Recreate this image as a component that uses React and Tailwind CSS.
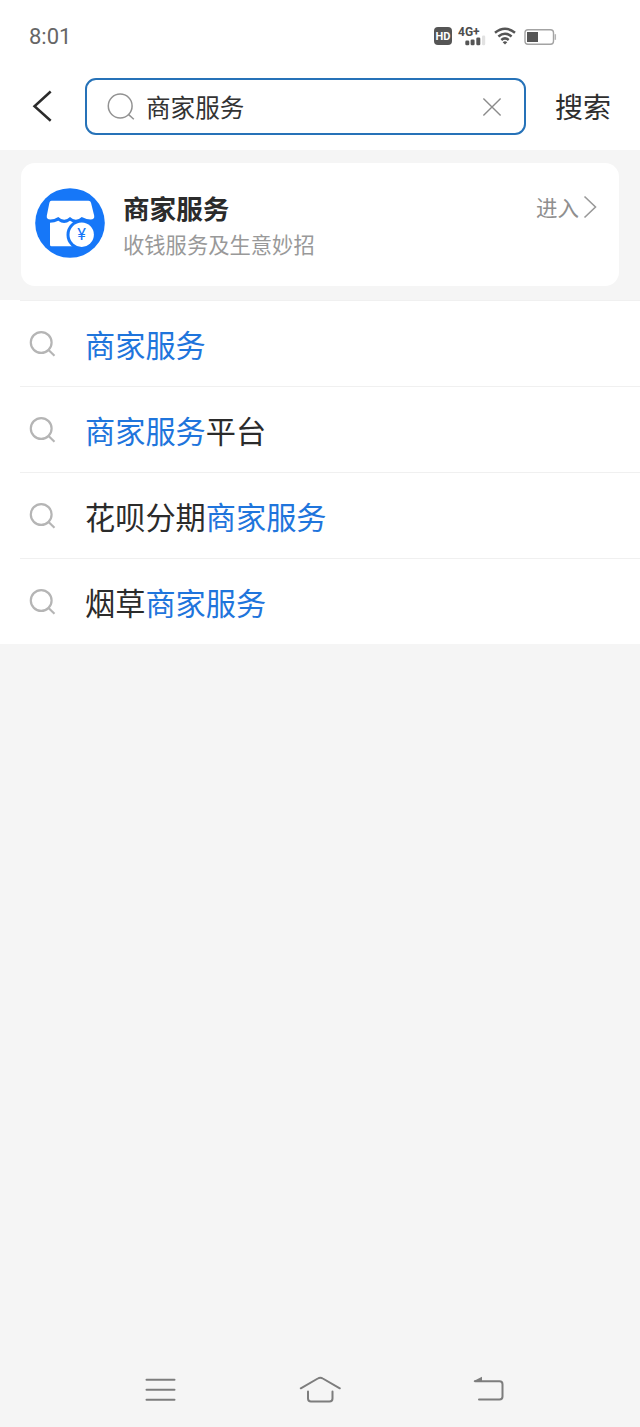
const SUGGESTIONS = [
  [{text: "商家服务", hit: true}],
  [{text: "商家服务", hit: true}, {text: "平台"}],
  [{text: "花呗分期"}, {text: "商家服务", hit: true}],
  [{text: "烟草"}, {text: "商家服务", hit: true}],
]

function StatusBar() {
  return (
    <div className="flex h-[72px] items-center justify-between pl-[29px] pr-[83px]">
      <span className="pt-px font-['Roboto'] text-[22px] leading-none text-[#666]">8:01</span>
      <div className="flex items-center">
        <div className="flex h-[18px] w-[18px] items-center justify-center rounded bg-[#555] font-['Roboto'] text-[11px] font-bold leading-none text-white">
          HD
        </div>
        <div className="relative ml-[6px] h-[20px] w-[29px]">
          <span className="absolute left-0 top-[-1px] font-['Roboto'] text-[12px] font-bold leading-[14px] text-[#4d4d4d]">
            4G+
          </span>
          <svg className="absolute bottom-0 left-[7px]" width="21" height="11" viewBox="0 0 21 11">
            <g fill="#555">
              <rect x="0.3" y="5.6" width="4" height="4.6" rx="1.3" />
              <rect x="5.6" y="4.4" width="4" height="5.8" rx="1.3" />
              <rect x="11.3" y="2.4" width="4" height="7.8" rx="1.3" />
            </g>
            <rect x="17" y="0.6" width="3.2" height="9.6" rx="1.2" fill="#e2e2e2" />
          </svg>
        </div>
        <svg className="ml-[7px]" width="22" height="18" viewBox="0 0 22 18">
          <g fill="none" stroke="#555" strokeWidth="2.5">
            <path d="M1 5.8Q11-2.4 21 5.8" />
            <path d="M4.4 9.5Q11 3.9 17.6 9.5" />
            <path d="M7.3 13Q11 9.8 14.7 13" />
          </g>
          <path d="M8.7 15.2Q11 13.5 13.3 15.2L11 17.6z" fill="#555" />
        </svg>
        <svg className="ml-[8px] mt-px" width="33" height="18" viewBox="0 0 33 18">
          <rect x="1" y="1.8" width="28.5" height="14.4" rx="3" fill="none" stroke="#a3a3a3" strokeWidth="1.4" />
          <rect x="3" y="4" width="11" height="10" fill="#555" />
          <path d="M31.3 6.2v5.6" stroke="#b5b5b5" strokeWidth="1.5" />
        </svg>
      </div>
    </div>
  )
}

function SearchHeader() {
  return (
    <div className="flex items-start pt-[6px]">
      <svg className="ml-[31px] mt-[11px] shrink-0" width="22" height="34" viewBox="0 0 22 34">
        <path d="M19.7 2.5L3.5 17.2L19.7 31.8" fill="none" stroke="#2b2b2b" strokeWidth="2.5" />
      </svg>
      <div className="ml-[32px] flex h-[57px] w-[441px] items-center rounded-[11px] border-2 border-[#2672b8] pl-[20px] pr-[22px]">
        <svg width="30" height="30" viewBox="0 0 30 30">
          <g fill="none" stroke="#929292" strokeWidth="1.5">
            <circle cx="13.2" cy="14" r="11.9" />
            <path d="M21.4 22.4l5.4 4.9" />
          </g>
        </svg>
        <span className="ml-[9px] text-[24.6px] leading-none text-[#333]">商家服务</span>
        <svg className="ml-auto" width="20" height="20" viewBox="0 0 20 20">
          <path d="M1.4 1.4l17.2 17.2M18.6 1.4L1.4 18.6" stroke="#8b8b8b" strokeWidth="1.4" />
        </svg>
      </div>
      <span className="ml-[29px] mt-[14px] text-[28px] leading-[28px] text-[#2e2e2e]">搜索</span>
    </div>
  )
}

function ShopIcon() {
  return (
    <svg className="mt-[25px] shrink-0" width="70" height="70" viewBox="0 0 70 70">
      <circle cx="35" cy="35" r="34.8" fill="#1677f8" />
      <path
        d="M16.5 12.7h37q2 0 2.5 2l3.2 13q.6 3.8-3.6 3.8-3.6 0-8.9-2.6-5.8 5.6-11.7 0-5.8 5.6-11.7 0-4.3 2.6-7.9 2.6-4.2 0-3.6-3.8L14.4 14.7q.4-2 2.1-2z"
        fill="#fff"
      />
      <path d="M15 34.8q4.5 0 8.3-2 5.8 4.4 11.7 0 4.5 3.4 9 2v23.4H16.5q-1.5 0-1.5-1.5z" fill="#fff" />
      <circle cx="46.7" cy="46.7" r="15.2" fill="#1677f8" />
      <circle cx="46.7" cy="46.7" r="12.2" fill="#fff" />
      <text
        x="46.7"
        y="52.3"
        textAnchor="middle"
        fontSize="16.5"
        fontFamily="Roboto, sans-serif"
        fill="#1677f8"
      >
        ¥
      </text>
    </svg>
  )
}

function ServiceCard() {
  return (
    <div className="mx-[21px] flex h-[123px] rounded-[14px] bg-white pl-[14px] pr-[21px]">
      <ShopIcon />
      <div className="ml-[18px] pt-[31px]">
        <h3 className="text-[26.6px] font-bold leading-[28px] text-[#2b2b2b]">商家服务</h3>
        <p className="mt-[10px] text-[21.3px] leading-[24px] text-[#999]">收钱服务及生意妙招</p>
      </div>
      <div className="ml-auto flex h-[88px] items-center">
        <span className="text-[21.5px] leading-none text-[#8f8f8f]">进入</span>
        <svg className="ml-[4px]" width="15" height="24" viewBox="0 0 15 24">
          <path d="M1.5 1.5L12.5 12L1.5 22.5" fill="none" stroke="#999" strokeWidth="1.6" />
        </svg>
      </div>
    </div>
  )
}

function SuggestionRow({parts}) {
  return (
    <li className="flex h-[85px] items-center pl-[29px]">
      <svg className="shrink-0" width="28" height="28" viewBox="0 0 28 28">
        <g fill="none" stroke="#b5b5b5" strokeWidth="2.2">
          <circle cx="12.2" cy="12.5" r="10.4" />
          <path d="M19.3 19.8l6.2 6" />
        </g>
      </svg>
      <span className="ml-[28px] pt-px text-[30.2px] leading-none text-[#2b2b2b]">
        {parts.map((part) => (
          <span key={part.text} className={part.hit ? "text-[#1f75dc]" : ""}>
            {part.text}
          </span>
        ))}
      </span>
    </li>
  )
}

function NavBar() {
  return (
    <nav className="mt-auto flex h-[74px] items-center pl-[145px] text-[#7d7d7d]">
      <svg width="31" height="28" viewBox="0 0 31 28">
        <path d="M1.5 3.7h28M1.5 13.7h28M1.5 23.7h28" stroke="currentColor" strokeWidth="2" strokeLinecap="round" />
      </svg>
      <svg className="ml-[123px]" width="43" height="28" viewBox="0 0 43 28">
        <g fill="none" stroke="currentColor" strokeWidth="2" strokeLinecap="round">
          <path d="M1.8 12.3L18.8 2.5q2.5-1.6 5 0l17 9.8" />
          <path d="M9 15.5v7q0 3 3 3h18.5q3 0 3-3v-7" />
        </g>
      </svg>
      <svg className="ml-[131px]" width="31" height="28" viewBox="0 0 31 28">
        <path
          d="M2 5.3h24.5q3 0 3 3v12.2q0 3-3 3H6"
          fill="none"
          stroke="currentColor"
          strokeWidth="2"
          strokeLinecap="round"
        />
        <path d="M.2 5.3L9 .8v4.5z" fill="currentColor" />
      </svg>
    </nav>
  )
}

export default function App() {
  return (
    <div className="flex min-h-screen w-full flex-col bg-[#f5f5f5] font-['Noto_Sans_CJK_SC',sans-serif]">
      <header className="h-[150px] bg-white">
        <StatusBar />
        <SearchHeader />
      </header>

      <section className="pb-[14px] pt-[13px]">
        <ServiceCard />
      </section>

      <ul className="bg-white">
        {SUGGESTIONS.map((parts, i) => (
          <div key={i}>
            <div className="ml-[20px] h-px bg-[#f0f0f0]" />
            <SuggestionRow parts={parts} />
          </div>
        ))}
      </ul>

      <NavBar />
    </div>
  )
}
